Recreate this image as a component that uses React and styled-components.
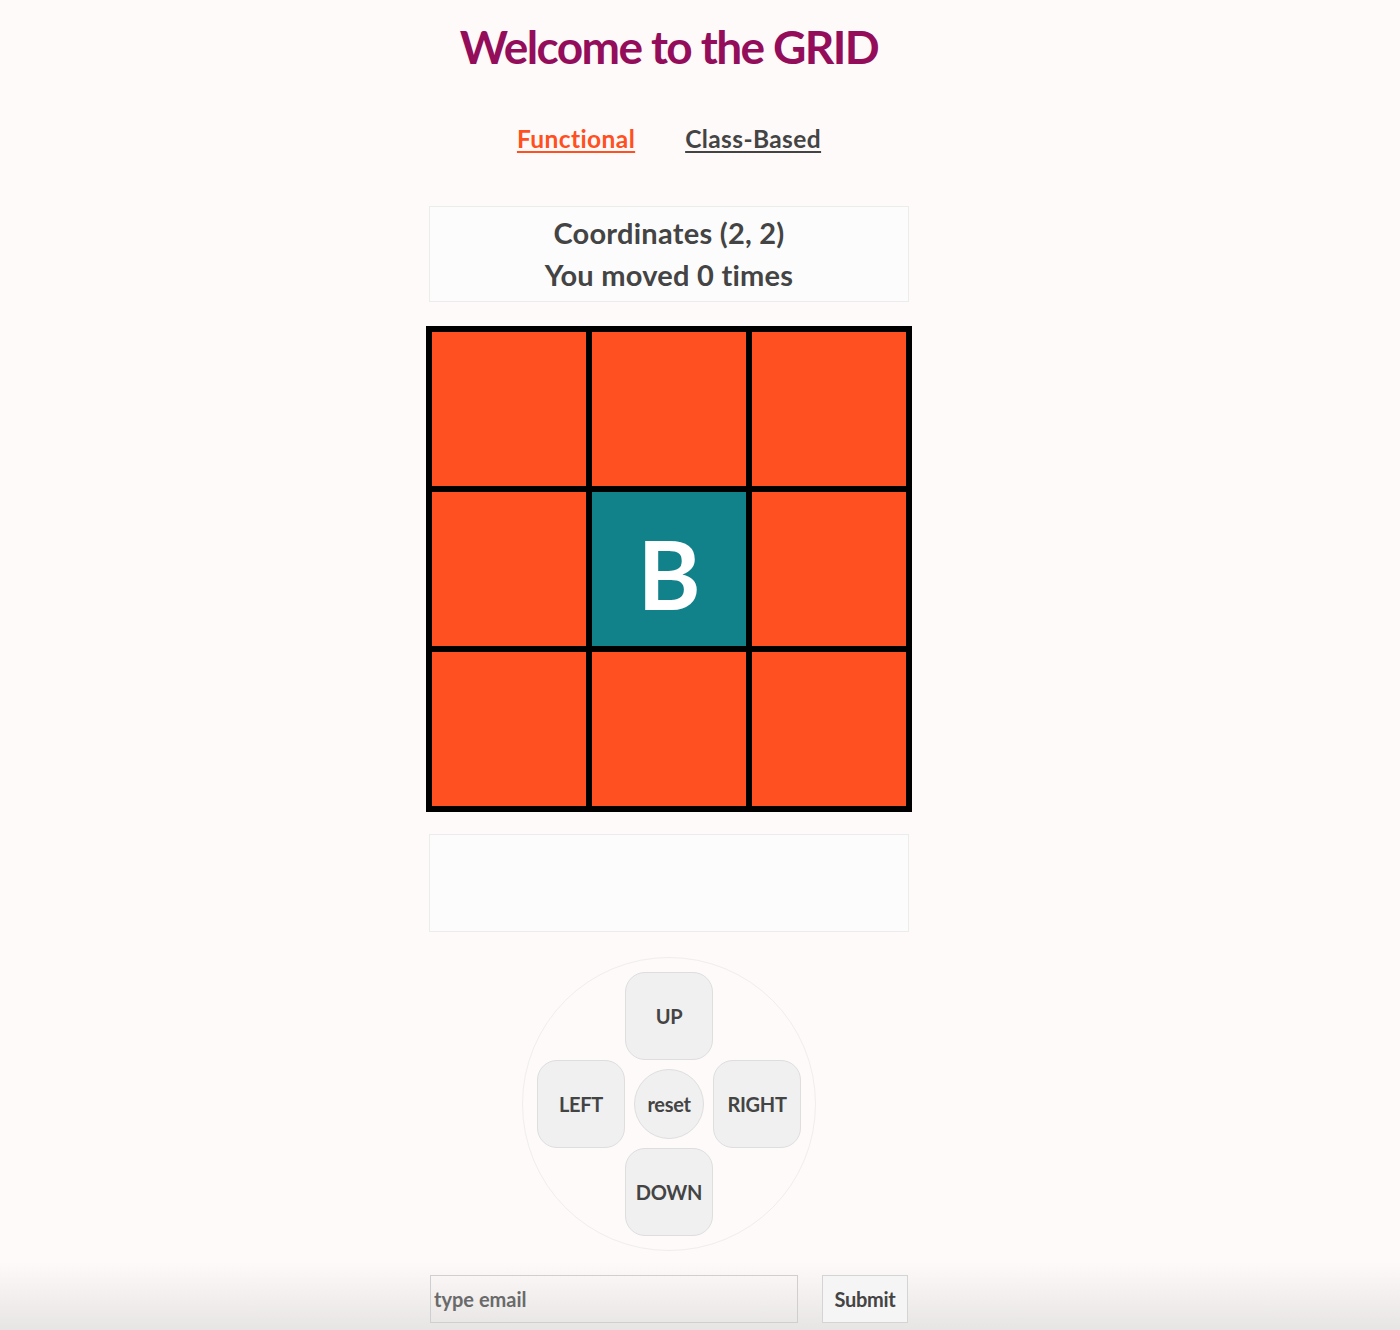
import React, { useState } from "react";
import styled, { createGlobalStyle } from "styled-components";

const GlobalStyle = createGlobalStyle`
    html, body {
        margin: 0;
        padding: 0;
    }
    body {
        min-height: 1330px;
        font-family: Lato, "Open Sans", sans-serif;
        background: linear-gradient(to bottom, #fffafa 0, #fffafa 1262px, #e7e4e4 1330px);
    }
`;

const Page = styled.div`
    display: flex;
    flex-direction: column;
    align-items: center;
    width: 1338px;
`;

const Title = styled.h1`
    margin: 19px 0 0;
    font-size: 46px;
    line-height: 55px;
    font-weight: 700;
    color: #930d5b;
    letter-spacing: -1.6px;
`;

const Nav = styled.nav`
    display: flex;
    gap: 50px;
    margin-top: 50px;
`;

const NavLink = styled.a`
    font-size: 24.5px;
    line-height: 29px;
    font-weight: 700;
    color: ${(p) => (p.$active ? "#ff5021" : "#444")};
    text-decoration: underline;
    text-underline-offset: 3px;
    text-decoration-thickness: 2px;
    letter-spacing: 0.4px;
    cursor: pointer;
`;

const InfoBox = styled.div`
    box-sizing: border-box;
    width: 480px;
    height: ${(p) => p.$height}px;
    margin-top: ${(p) => p.$top}px;
    padding: 5px 0;
    border: 1px solid #ececec;
    background: #fcfcfc;
    text-align: center;
    color: #444;
`;

const InfoLine = styled.h3`
    margin: 0;
    font-size: 29px;
    line-height: 42px;
    font-weight: 700;
    letter-spacing: 0.25px;
`;

const Board = styled.div`
    display: grid;
    grid-template-columns: repeat(3, 160px);
    margin-top: 24px;
    border: 3px solid #000;
`;

const Square = styled.div`
    box-sizing: border-box;
    width: 160px;
    height: 160px;
    border: 3px solid #000;
    background: ${(p) => (p.$active ? "#12828a" : "#ff5021")};
    color: #fff;
    display: flex;
    align-items: center;
    justify-content: center;
    font-size: 96px;
    font-weight: 700;
    padding-top: 6px;
`;

const Keypad = styled.div`
    box-sizing: border-box;
    width: 294px;
    height: 294px;
    margin-top: 25px;
    padding: 14px;
    border: 1px solid #efeded;
    border-radius: 50%;
    display: grid;
    grid-template-columns: repeat(3, 88px);
    grid-template-rows: repeat(3, 88px);
    place-items: center;
`;

const KeyButton = styled.button`
    grid-column: ${(p) => p.$col};
    grid-row: ${(p) => p.$row};
    box-sizing: border-box;
    width: ${(p) => (p.$round ? 70 : 88)}px;
    height: ${(p) => (p.$round ? 70 : 88)}px;
    border: 1px solid #dedede;
    border-radius: ${(p) => (p.$round ? "50%" : "20px")};
    background: #f0f0f0;
    color: #444;
    font-family: Lato, "Open Sans", sans-serif;
    font-size: 20px;
    font-weight: 700;
    letter-spacing: -0.3px;
    padding: 0;
    cursor: pointer;
`;

const Form = styled.form`
    display: flex;
    gap: 24px;
    width: 478px;
    margin-top: 24px;
`;

const EmailInput = styled.input`
    box-sizing: border-box;
    width: 368px;
    height: 48px;
    padding: 0 3px;
    border: 1px solid #cfcfcf;
    background: transparent;
    color: #444;
    font-family: Lato, "Open Sans", sans-serif;
    font-size: 20px;
    font-weight: 700;
    &::placeholder {
        color: #6a6a6a;
    }
`;

const SubmitButton = styled.button`
    box-sizing: border-box;
    width: 86px;
    height: 48px;
    border: 1px solid #d4d4d4;
    background: #f6f5f5;
    color: #444;
    font-family: Lato, "Open Sans", sans-serif;
    font-size: 20px;
    font-weight: 700;
    letter-spacing: -0.3px;
    padding: 0;
    cursor: pointer;
`;

const keys = [
    { label: "UP", col: 2, row: 1 },
    { label: "LEFT", col: 1, row: 2 },
    { label: "reset", col: 2, row: 2, round: true },
    { label: "RIGHT", col: 3, row: 2 },
    { label: "DOWN", col: 2, row: 3 },
];

const App = () => {
    const [active] = useState(4);
    const [email, setEmail] = useState("");

    return <>
        <GlobalStyle />
        <Page>
            <Title>Welcome to the GRID</Title>
            <Nav>
                <NavLink $active>Functional</NavLink>
                <NavLink>Class-Based</NavLink>
            </Nav>
            <InfoBox $top={53} $height={96}>
                <InfoLine>Coordinates (2, 2)</InfoLine>
                <InfoLine>You moved 0 times</InfoLine>
            </InfoBox>
            <Board>
                {Array.from({ length: 9 }).map((_, i) => (
                    <Square key={i} $active={i === active}>{i === active ? "B" : null}</Square>
                ))}
            </Board>
            <InfoBox $top={22} $height={98} />
            <Keypad>
                {keys.map((k) => (
                    <KeyButton key={k.label} $col={k.col} $row={k.row} $round={k.round}>{k.label}</KeyButton>
                ))}
            </Keypad>
            <Form onSubmit={(e) => e.preventDefault()}>
                <EmailInput
                    type="email"
                    placeholder="type email"
                    value={email}
                    onChange={(e) => setEmail(e.target.value)}
                />
                <SubmitButton type="submit">Submit</SubmitButton>
            </Form>
        </Page>
    </>;
};

export default App;
